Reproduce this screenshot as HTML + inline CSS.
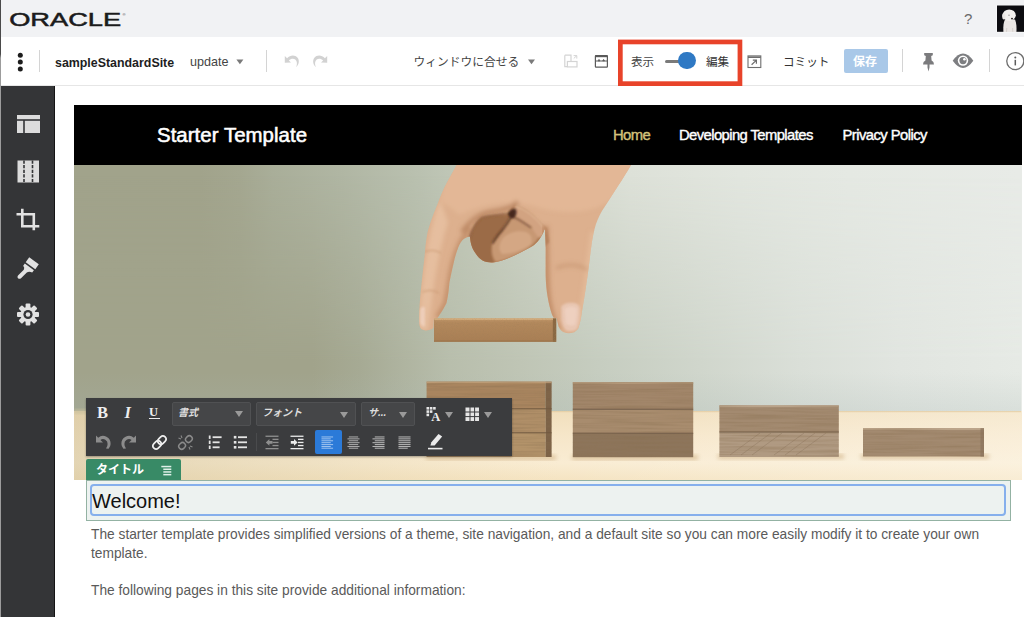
<!DOCTYPE html>
<html lang="ja">
<head>
<meta charset="utf-8">
<title>sampleStandardSite</title>
<style>
*{box-sizing:border-box;margin:0;padding:0}
html,body{width:1024px;height:617px;overflow:hidden;background:#fff}
body{font-family:"Liberation Sans","Noto Sans CJK JP",sans-serif;position:relative;color:#222}
.abs{position:absolute}
#topbar{left:0;top:0;width:1024px;height:37px;background:#f1f2f4}
#toolbar{left:0;top:37px;width:1024px;height:49px;background:#fff;border-bottom:1px solid #e6e6e6}
#leftedge{left:0;top:0;width:1px;height:86px;background:linear-gradient(#4a4a4a 0,#4a4a4a 54px,#9c9c9c 58px,#9c9c9c 86px)}
#sidebar{left:0;top:86px;width:55px;height:531px;background:#343537;border-right:1px solid #141414;border-left:1px solid #9c9c9c}
.t{position:absolute;white-space:nowrap;line-height:1}
.sep{position:absolute;width:1px;background:#d4d4d4}
#preview{left:74px;top:105px;width:948px;height:512px}
#sitehead{left:0;top:0;width:948px;height:60px;background:#000}
#photo{left:0;top:60px;width:948px;height:315px;overflow:hidden}
#rte{left:86px;top:397.5px;width:426.3px;height:58.8px;background:#3b3c3e;box-shadow:0 1px 2px rgba(0,0,0,.35)}
.sel{position:absolute;height:24px;top:4px;background:#454648;border:1px solid #505153;border-radius:2px}
.arr{position:absolute;width:0;height:0;border-left:4px solid transparent;border-right:4px solid transparent;border-top:6px solid #9a9a9a}
#tag{left:86px;top:459px;width:95px;height:21px;background:#388a66;border-radius:2px 2px 0 0}
#titleouter{left:86px;top:480px;width:925px;height:41px;background:#edf2f0;border:1px solid #93b2a3}
#titleinner{left:90px;top:484px;width:916px;height:32px;border:2px solid #86afec;border-radius:4px;background:#edf2f0}
</style>
</head>
<body>
<div class="abs" id="topbar"></div>
<div class="abs" id="toolbar"></div>
<div class="abs" id="leftedge"></div>
<div class="abs" id="sidebar"></div>

<!-- TOPBAR CONTENT -->
<svg class="abs" style="left:8px;top:8px" width="124" height="22" viewBox="0 0 124 22">
  <text x="1.2" y="18" font-family="Liberation Sans, sans-serif" font-size="19" fill="#1b1b1b" stroke="#1b1b1b" stroke-width="0.5" textLength="112" lengthAdjust="spacingAndGlyphs">ORACLE</text>
  <text x="114.6" y="7.6" font-family="Liberation Sans, sans-serif" font-size="4.2" fill="#333">®</text>
</svg>
<div class="t" style="left:964px;top:11px;font-size:15px;color:#6a6a6a">?</div>
<svg class="abs" style="left:996px;top:4px" width="28" height="29" viewBox="996 4 28 29">
  <defs><filter id="avb" x="-10%" y="-10%" width="120%" height="120%"><feGaussianBlur stdDeviation="0.5"/></filter></defs>
  <rect x="996.3" y="4.8" width="28" height="27.7" fill="#fafafa"/>
  <rect x="997" y="5.5" width="27" height="26.3" fill="#0c0c10"/>
  <g filter="url(#avb)">
    <path d="M1003.4 32 C1003 26 1003.6 22 1005 19.5 L1015 19.5 C1016.4 23 1016.8 27 1016.4 32Z" fill="#eae6e4"/>
    <ellipse cx="1009.2" cy="15.2" rx="6.6" ry="5.8" fill="#f3f0ee"/>
    <ellipse cx="1003.8" cy="16.2" rx="1.6" ry="3.2" fill="#ebe7e4"/>
    <ellipse cx="1012" cy="18.6" rx="1" ry="0.9" fill="#2a2624"/>
    <ellipse cx="1009" cy="15.2" rx="0.7" ry="0.6" fill="#8a8684"/>
    <path d="M1006.5 31.8 L1006.8 28 M1012.8 31.8 L1012.6 28" stroke="#cfcac6" stroke-width="0.8"/>
  </g>
</svg>
<!-- TOOLBAR CONTENT -->
<svg class="abs" style="left:16px;top:50px" width="8" height="24" viewBox="0 0 8 24">
  <circle cx="4.3" cy="5.2" r="2.5" fill="#1c1c1c"/><circle cx="4.3" cy="12.1" r="2.5" fill="#1c1c1c"/><circle cx="4.3" cy="19" r="2.5" fill="#1c1c1c"/>
</svg>
<div class="sep" style="left:39px;top:50px;height:22px"></div>
<div class="t" id="sitename" style="left:55px;top:56.5px;font-size:12.4px;font-weight:bold;color:#1e1e1e">sampleStandardSite</div>
<div class="t" id="upd" style="left:190px;top:55.5px;font-size:12.6px;color:#444">update</div>
<svg class="abs" style="left:235px;top:58px" width="10" height="8" viewBox="0 0 10 8"><path d="M1.4 1.6 H8.4 L4.9 6.2Z" fill="#7a7a7a"/></svg>
<div class="sep" style="left:266px;top:50px;height:22px"></div>
<svg class="abs" style="left:284px;top:53px" width="16" height="15" viewBox="0 0 16 15"><path d="M0.8 3 L0.8 9.8 L7 9.5 L4.9 7.4 C6.6 5.6 9.4 5 11.3 6.5 C13.2 8.1 13.4 11 12.2 14.2 C15 11.6 15.7 7.6 13.6 4.8 C11.1 1.6 6.4 1.6 3.1 5.3 Z" fill="#d2d2d2"/></svg>
<svg class="abs" style="left:312px;top:53px" width="16" height="15" viewBox="0 0 16 15"><path transform="translate(16,0) scale(-1,1)" d="M0.8 3 L0.8 9.8 L7 9.5 L4.9 7.4 C6.6 5.6 9.4 5 11.3 6.5 C13.2 8.1 13.4 11 12.2 14.2 C15 11.6 15.7 7.6 13.6 4.8 C11.1 1.6 6.4 1.6 3.1 5.3 Z" fill="#d2d2d2"/></svg>
<div class="t" id="fit" style="margin-top:1.5px;left:413.5px;top:54.2px;font-size:11.75px;color:#444">ウィンドウに合せる</div>
<svg class="abs" style="left:527px;top:58px" width="10" height="8" viewBox="0 0 10 8"><path d="M1 1.6 H8 L4.5 6.2Z" fill="#7a7a7a"/></svg>
<svg class="abs" style="left:562px;top:52px" width="18" height="18" viewBox="0 0 18 18" fill="none" stroke="#d4d4d4" stroke-width="1.2">
  <path d="M2.8 3.2 H9 V9.5 M5.4 14.6 H2.8 V3.2"/><rect x="5.4" y="9.5" width="9.6" height="5.4" fill="#fff"/><path d="M11.6 3.6 H14.8 V6.6 M14.6 3.8 L11.8 6.4" stroke-width="1"/>
</svg>
<svg class="abs" style="left:593px;top:53px" width="16" height="16" viewBox="0 0 16 16" fill="none" stroke="#5a5a5a" stroke-width="1.2">
  <rect x="2.4" y="2.6" width="12" height="11.6" rx="0.6"/><path d="M2.4 3.2 H14.4" stroke-width="2"/><path d="M2.4 8 H14.4" stroke-width="1"/><path d="M5 8 L6 6.3 L7 8Z M9.6 8 L10.6 6.3 L11.6 8Z" fill="#5a5a5a" stroke-width="0.6"/>
</svg>
<svg class="abs" style="left:616px;top:38px" width="130" height="50" viewBox="616 38 130 50"><rect x="620.35" y="41.95" width="119.6" height="41.7" fill="none" stroke="#e8432a" stroke-width="4.7"/></svg>
<div class="t" id="hyoji" style="margin-top:1.5px;left:631px;top:54.3px;font-size:11.6px;color:#444">表示</div>
<div class="abs" style="left:665px;top:59.5px;width:20px;height:3px;background:#7a7a7a;border-radius:2px"></div>
<div class="abs" style="left:678.3px;top:52px;width:17.4px;height:17.4px;border-radius:50%;background:#2f79c4"></div>
<div class="t" id="henshu" style="margin-top:1.5px;left:706px;top:54.3px;font-size:11.6px;color:#333">編集</div>
<svg class="abs" style="left:747px;top:53px" width="16" height="16" viewBox="0 0 16 16" fill="none" stroke="#6e6e6e" stroke-width="1.1">
  <rect x="1" y="2.9" width="12.8" height="11.6"/><path d="M1 4.2 H13.8" stroke-width="1.6"/><path d="M4.6 11.8 L9.2 7.4 M5.8 7.2 H9.4 V10.8" stroke-width="1.2"/>
</svg>
<div class="t" id="commit" style="margin-top:1.5px;left:783px;top:54.3px;font-size:11.6px;color:#333">コミット</div>
<div class="abs" style="left:844px;top:49px;width:44px;height:24px;background:#a9c8e8;border-radius:2px"></div>
<div class="t" id="save" style="margin-top:1.5px;left:853px;top:54px;font-size:12px;font-weight:bold;color:#fff">保存</div>
<div class="sep" style="left:902px;top:49px;height:23px"></div>
<svg class="abs" style="left:920px;top:51.6px" width="18" height="21" viewBox="0 0 18 21"><path d="M4.2 1 H12.8 V3.2 L11.2 4 L11.6 8.4 Q14 9.6 14 12.4 H9.5 V15.5 L8.5 19.5 L7.5 15.5 V12.4 H3 Q3 9.6 5.4 8.4 L5.8 4 L4.2 3.2Z" fill="#7b7b7d"/></svg>
<svg class="abs" style="left:952px;top:52px" width="22" height="18" viewBox="0 0 22 18">
  <path d="M0.7 8.8 Q11 -5.6 21.3 8.8 Q11 23.2 0.7 8.8Z" fill="#7d7e81"/><circle cx="11" cy="8.6" r="5.2" fill="#fff"/><circle cx="11" cy="8.6" r="3.6" fill="#7d7e81"/><circle cx="12.4" cy="7.3" r="1.3" fill="#fff"/>
</svg>
<div class="sep" style="left:989px;top:49px;height:23px"></div>
<svg class="abs" style="left:1004px;top:50px" width="22" height="22" viewBox="0 0 22 22"><circle cx="11.3" cy="11.1" r="8.55" fill="none" stroke="#6c6c6c" stroke-width="1.3"/><rect x="10.55" y="9.8" width="1.5" height="5.6" fill="#5c5c5c"/><circle cx="11.3" cy="7.4" r="1" fill="#5c5c5c"/></svg>
<!-- SIDEBAR ICONS -->
<svg class="abs" style="left:16px;top:114px" width="26" height="21" viewBox="0 0 26 21" fill="#dcdcdc">
  <rect x="1" y="1" width="23" height="4.2"/><rect x="1" y="6.8" width="6.2" height="12.2"/><rect x="8.8" y="6.8" width="15.2" height="12.2"/>
</svg>
<svg class="abs" style="left:16px;top:159px" width="26" height="25" viewBox="0 0 26 25">
  <rect x="1.5" y="1.5" width="21.5" height="22" fill="#dcdcdc"/>
  <path d="M8 1.5 V23.5 M16.5 1.5 V23.5" stroke="#343537" stroke-width="1.6" stroke-dasharray="3.2 1.4"/>
</svg>
<svg class="abs" style="left:15px;top:207px" width="26" height="25" viewBox="0 0 26 25" fill="none" stroke="#e2e2e2" stroke-width="2.6">
  <path d="M7.3 1.8 V19.3 H24.3"/><path d="M1.5 7.2 H18.8 V23.3"/>
</svg>
<svg class="abs" style="left:15px;top:255px" width="26" height="25" viewBox="0 0 26 25" fill="#e2e2e2">
  <path d="M14.2 2.2 L23.8 9.2 L20.3 14.2 L10.7 7.2Z"/>
  <path d="M9.8 8.6 L18.9 15.3 L17.2 17.4 Q13.8 16.2 11.8 17.6 L6 23.3 Q4.4 24.4 3 23.2 Q1.8 21.8 3 20.4 L8.8 14.8 Q10 12.6 8.2 10.7Z"/>
</svg>
<svg class="abs" style="left:15px;top:302px" width="26" height="25" viewBox="0 0 26 25">
  <g transform="translate(13,12.5)" fill="#e2e2e2">
    <circle r="7.6"/>
    <g id="gt"><rect x="-2.4" y="-11" width="4.8" height="22" rx="1"/></g>
    <rect x="-2.4" y="-11" width="4.8" height="22" rx="1" transform="rotate(45)"/>
    <rect x="-2.4" y="-11" width="4.8" height="22" rx="1" transform="rotate(90)"/>
    <rect x="-2.4" y="-11" width="4.8" height="22" rx="1" transform="rotate(135)"/>
    <circle r="4.6" fill="#343537"/><circle r="2.3" fill="#e2e2e2"/>
  </g>
</svg>

<div class="abs" id="preview">
  <div class="abs" id="sitehead">
    <div class="t" style="left:83px;top:20px;font-size:20.4px;color:#fff;letter-spacing:0.05px;-webkit-text-stroke:0.55px #fff">Starter Template</div>
    <div class="t" style="left:539px;top:23.3px;font-size:14.8px;color:#d5c27a;letter-spacing:-0.6px;-webkit-text-stroke:0.4px #d5c27a">Home</div>
    <div class="t" style="left:605px;top:23.3px;font-size:14.8px;color:#fff;letter-spacing:-0.58px;-webkit-text-stroke:0.4px #fff">Developing Templates</div>
    <div class="t" style="left:768.5px;top:23.3px;font-size:14.8px;color:#fff;letter-spacing:-0.55px;-webkit-text-stroke:0.4px #fff">Privacy Policy</div>
  </div>
  <div class="abs" id="photo">
<!-- PHOTO SVG -->
<svg class="abs" style="left:0;top:0" width="948" height="315" viewBox="74 165 948 315" preserveAspectRatio="none">
  <defs>
    <linearGradient id="wall" x1="74" y1="0" x2="1021" y2="0" gradientUnits="userSpaceOnUse">
      <stop offset="0.000" stop-color="#a1a38b"/>
      <stop offset="0.133" stop-color="#a1a38b"/>
      <stop offset="0.175" stop-color="#a4a790"/>
      <stop offset="0.210" stop-color="#a9ae99"/>
      <stop offset="0.281" stop-color="#b0b6a3"/>
      <stop offset="0.359" stop-color="#b9c0af"/>
      <stop offset="0.403" stop-color="#c0c7b7"/>
      <stop offset="0.492" stop-color="#d0d6ca"/>
      <stop offset="0.588" stop-color="#dde1d8"/>
      <stop offset="0.703" stop-color="#e2e6df"/>
      <stop offset="0.819" stop-color="#e5e9e3"/>
      <stop offset="1.000" stop-color="#e8ebe7"/>
    </linearGradient>
    <linearGradient id="wallb" x1="74" y1="0" x2="1021" y2="0" gradientUnits="userSpaceOnUse">
      <stop offset="0.000" stop-color="#a1a38b"/>
      <stop offset="0.252" stop-color="#a1a38b"/>
      <stop offset="0.302" stop-color="#a6aa94"/>
      <stop offset="0.344" stop-color="#aeb39f"/>
      <stop offset="0.397" stop-color="#b8beac"/>
      <stop offset="0.471" stop-color="#bfc5b5"/>
      <stop offset="0.555" stop-color="#c6cdc0"/>
      <stop offset="0.661" stop-color="#d0d6cc"/>
      <stop offset="0.767" stop-color="#dadfd8"/>
      <stop offset="0.872" stop-color="#e1e5e0"/>
      <stop offset="1.000" stop-color="#e6eae5"/>
    </linearGradient>
    <linearGradient id="abovet" x1="0" y1="372" x2="0" y2="412" gradientUnits="userSpaceOnUse">
      <stop offset="0" stop-color="#a9b8b4" stop-opacity="0"/>
      <stop offset="1" stop-color="#a9b8b4" stop-opacity="0.22"/>
    </linearGradient>
    <linearGradient id="vfade" x1="0" y1="175" x2="0" y2="360" gradientUnits="userSpaceOnUse">
      <stop offset="0" stop-color="#fff" stop-opacity="0"/>
      <stop offset="1" stop-color="#fff" stop-opacity="1"/>
    </linearGradient>
    <mask id="vmask" maskUnits="userSpaceOnUse" x="74" y="165" width="947" height="250"><rect x="74" y="165" width="947" height="250" fill="url(#vfade)"/></mask>
    <linearGradient id="table" x1="0" x2="0" y1="411" y2="480" gradientUnits="userSpaceOnUse">
      <stop offset="0" stop-color="#f1dfbd"/>
      <stop offset="0.35" stop-color="#f6e6c9"/>
      <stop offset="0.75" stop-color="#f9ecd3"/>
      <stop offset="1" stop-color="#f5e4c2"/>
    </linearGradient>
    <linearGradient id="tableR" x1="560" x2="1021" y1="0" y2="0" gradientUnits="userSpaceOnUse">
      <stop offset="0" stop-color="#fff" stop-opacity="0"/>
      <stop offset="1" stop-color="#fffaf0" stop-opacity="0.38"/>
    </linearGradient>
    <linearGradient id="tableL" x1="74" x2="560" y1="0" y2="0" gradientUnits="userSpaceOnUse">
      <stop offset="0" stop-color="#cdbd94" stop-opacity="0.5"/>
      <stop offset="0.5" stop-color="#d8c8a0" stop-opacity="0.3"/>
      <stop offset="1" stop-color="#e8d0a0" stop-opacity="0"/>
    </linearGradient>
    <linearGradient id="skin" x1="420" x2="630" y1="0" y2="0" gradientUnits="userSpaceOnUse">
      <stop offset="0" stop-color="#e9c3a3"/>
      <stop offset="0.12" stop-color="#dfb08d"/>
      <stop offset="0.45" stop-color="#d6a37f"/>
      <stop offset="0.7" stop-color="#dcab88"/>
      <stop offset="1" stop-color="#e2b899"/>
    </linearGradient>
    <linearGradient id="thumb" x1="546" x2="596" y1="0" y2="0" gradientUnits="userSpaceOnUse">
      <stop offset="0" stop-color="#c8926e"/>
      <stop offset="0.35" stop-color="#dba984"/>
      <stop offset="1" stop-color="#e4b896"/>
    </linearGradient>
    <linearGradient id="blk" x1="0" x2="0" y1="318" y2="342" gradientUnits="userSpaceOnUse">
      <stop offset="0" stop-color="#c2986a"/>
      <stop offset="0.2" stop-color="#b2885c"/>
      <stop offset="1" stop-color="#a87e54"/>
    </linearGradient>
    <filter id="grain" x="0" y="0" width="100%" height="100%">
      <feTurbulence type="fractalNoise" baseFrequency="0.015 0.45" numOctaves="2" seed="7" result="n"/>
      <feColorMatrix in="n" type="matrix" values="0 0 0 0 0.25  0 0 0 0 0.16  0 0 0 0 0.08  1.6 0 0 0 -0.62"/>
      <feComposite in2="SourceGraphic" operator="in"/>
    </filter>
    <filter id="speck" x="0" y="0" width="100%" height="100%">
      <feTurbulence type="fractalNoise" baseFrequency="0.9" numOctaves="1" seed="3" result="n"/>
      <feColorMatrix in="n" type="matrix" values="0 0 0 0 0.35  0 0 0 0 0.22  0 0 0 0 0.1  1.8 0 0 0 -0.85"/>
      <feComposite in2="SourceGraphic" operator="in"/>
    </filter>
    <filter id="soft" x="-5%" y="-5%" width="110%" height="110%"><feGaussianBlur stdDeviation="2.2"/></filter>
    <filter id="soft1" x="-5%" y="-5%" width="110%" height="110%"><feGaussianBlur stdDeviation="1"/></filter>
    <clipPath id="handclip"><path id="handp" d="M456.7 165 C453 172 449.5 178 446.5 183.4 C443 190 440 197 437.7 203.8 C435 210 432.5 216.5 430.4 222.8 C429 227 427.8 231 426.9 235.9 C425.8 242 425.2 249 424.6 256.4 C423.6 265 422.6 274 421.7 282.6 C420.9 290 420.1 298 419.6 306 C419.2 312 419 318 419.3 323.5 C419.6 326.5 420.3 328.3 421.7 329.3 C423.5 330.5 425.5 330.6 427.5 330.2 C429.8 329.7 431.8 329 433.4 327.9 L433.9 319.1 L437.7 317.7 C441 313 444 308 446.5 303.1 C448 297 448.8 290 449.4 282.6 C450.6 276 452.2 269 453.8 262.2 C455 257 456.5 252 458.2 247.6 C459.8 243.5 461.6 240.6 464 238.8 C466 237.4 468 236.7 469.9 236.5 C470.2 239.5 470.6 242 471.3 244.7 C472.3 248 473.8 251 475.7 253.4 C477.8 256.4 480 259 483 260.7 C486.5 262.4 490.5 262.6 494.7 262.2 C499.5 261.6 504.5 259.8 509.3 257.8 C516 255 523 251.5 530 247.6 C533 246 535.5 244 537.5 241.8 C540.5 238.5 543 233.5 544.8 228.6 C545.4 234 545.7 241 545.7 247.6 C545.7 257 545.6 267 545.7 276.8 C545.9 284 546.6 291 547.7 297.2 C548.8 303.5 550.3 309.5 552.1 314.7 L553.6 317.7 L556.5 318 C557.3 321 557.9 323.5 558.6 326.4 C560 329.5 561.8 331.3 563.8 332.3 C566.5 333.4 569.8 333.5 572.6 332.8 C575 332 577 330.3 578.4 327.9 C580.2 323 581.2 317.5 581.9 311.8 C583.3 304 584.6 296 585.7 288.5 C586.8 281.5 587.7 274.5 588.6 268 C589.6 260 590.5 252 591.5 244.7 C592.5 237.5 594 230.5 595.9 224.2 C598 218 601 212 604.7 206.7 C609 200 613.5 193 617.8 186.3 C622.5 179 627 172 631 165 Z"/></clipPath>
  </defs>
  <rect x="74" y="165" width="948" height="315" fill="url(#wall)"/>
  <rect x="74" y="165" width="947" height="247" fill="url(#wallb)" mask="url(#vmask)"/>
  <rect x="74" y="372" width="947" height="40" fill="url(#abovet)"/>
  <!-- table -->
  <rect x="74" y="411" width="948" height="69" fill="url(#table)"/>
  <rect x="74" y="411" width="948" height="69" fill="url(#tableL)"/>
  <rect x="74" y="411" width="948" height="69" fill="url(#tableR)"/>
  <rect x="74" y="409" width="420" height="5" fill="#c9c09c" opacity="0.6" filter="url(#soft1)"/>
  <rect x="500" y="411" width="521" height="1.2" fill="#e3cba0" opacity="0.7"/>
  <!-- block shadows on table -->
  <g filter="url(#soft)" fill="#c9a878" opacity="0.55">
    <rect x="426" y="455" width="130" height="5"/><rect x="572" y="455" width="126" height="5"/><rect x="718" y="454" width="126" height="5"/><rect x="861" y="454" width="128" height="5"/>
  </g>
  <!-- stack 1 -->
  <g>
    <rect x="426.6" y="381.6" width="119" height="27.4" fill="#a9855f"/>
    <rect x="426.6" y="409" width="119" height="24" fill="#b08f68"/>
    <rect x="426.6" y="433" width="119" height="24" fill="#b3936a"/>
    <path d="M545.6 381.6 H551.6 V457 H545.6Z" fill="#7c6247"/>
    <rect x="426.6" y="381.6" width="125" height="1.6" fill="#c0a07a" opacity="0.8"/>
    <path d="M426.6 408.8 H551.6 M426.6 432.8 H551.6" stroke="#6f573f" stroke-width="1"/>
  </g>
  <!-- stack 2 -->
  <g>
    <rect x="572.8" y="382.2" width="120.4" height="27" fill="#a2866a"/>
    <rect x="572.8" y="409.2" width="120.4" height="24" fill="#a88c6e"/>
    <rect x="572.8" y="433.2" width="120.4" height="24" fill="#8d755b"/>
    <rect x="572.8" y="382.2" width="120.4" height="1.6" fill="#bda283" opacity="0.8"/>
    <path d="M572.8 409.2 H693.2 M572.8 433.2 H693.2" stroke="#6a5540" stroke-width="1"/>
  </g>
  <!-- stack 3 -->
  <g>
    <rect x="719.4" y="405.4" width="119.4" height="26.6" fill="#a38a70"/>
    <rect x="719.4" y="432" width="119.4" height="25" fill="#b09a82"/>
    <rect x="719.4" y="405.4" width="119.4" height="1.8" fill="#bea78d" opacity="0.85"/>
    <path d="M719.4 432 H838.8" stroke="#6f5a45" stroke-width="1"/>
    <path d="M730 455 L760 433 M752 455 L782 433 M774 455 L804 433 M796 455 L826 433 M741 455 L771 433 M785 455 L815 433" stroke="#8f7a62" stroke-width="0.8" opacity="0.6"/>
  </g>
  <!-- stack 4 -->
  <g>
    <rect x="863" y="428.2" width="121" height="28.3" fill="#a38a70"/>
    <rect x="863" y="428.2" width="121" height="1.8" fill="#bfa88e" opacity="0.85"/>
    <rect x="980.5" y="428.2" width="3.5" height="28.3" fill="#8a735c" opacity="0.7"/>
  </g>
  <g filter="url(#grain)" opacity="0.55">
    <rect x="426.6" y="381.6" width="125" height="75.4"/><rect x="572.8" y="382.2" width="120.4" height="75"/><rect x="719.4" y="405.4" width="119.4" height="51.6"/><rect x="863" y="428.2" width="121" height="28.3"/>
  </g>
  <!-- hand -->
  <use href="#handp" fill="#ddb08e"/>
  <g clip-path="url(#handclip)">
    <g filter="url(#soft)">
      <!-- light back of hand -->
      <path d="M450 160 L640 160 L612 200 C590 215 560 215 530 205 C505 200 480 205 460 215 L440 200Z" fill="#e3b897" opacity="0.9"/>
      <!-- index finger light side -->
      <path d="M440 200 C430 225 425 260 421 300 L419 330 L428 330 C432 300 436 260 448 222Z" fill="#e8c3a4" opacity="0.75"/>
      <!-- index inner shadow -->
      <path d="M471 228 C462 238 457 250 453 266 C450 280 449 292 446 304 L438 318" stroke="#bf8b66" stroke-width="7" fill="none" opacity="0.75"/>
      <!-- fold between index base and curled fingers -->
      <path d="M462 232 C470 222 478 214 492 212 C503 210 512 208 518 202" stroke="#b8825e" stroke-width="5" fill="none" opacity="0.8"/>
    </g>
    <!-- curled fingers -->
    <path d="M469.3 238.2 C472 229 476 221.5 481.7 217.6 C489 215.5 499 214.6 507.9 213.4 C510 210.5 512 207 514.8 205.2 C519 206.5 523.5 208.3 527.2 210.7 C532 214 536 218 539.6 221.7 L547 229 L549 242 L530 262 L480 270 L466 250Z" fill="#a97650" filter="url(#soft1)"/>
    <g filter="url(#soft1)">
      <path d="M481.7 218 C476 222 472 230 469.3 238.5 C470 246 473 254 480 260 C484 263 489 263.5 494 262.5 C491 256 490.5 249 492.7 242.4 L502.4 230 L510 217 C502 214.5 490 215.5 481.7 218Z" fill="#9a6946" opacity="0.9"/>
      <path d="M502.4 230 L492.7 242.4 C491 250 492 257 496 262 C506 260 516 255 526 250 C532 246 536 242 538 238 L531.3 227.9 L514.8 217.6 L510.6 217Z" fill="#c79873"/>
      <path d="M503 238 C509 232 518 230 526 232 C531 234 533 239 531 244 C524 250 512 254 502 254 C498 250 499 243 503 238Z" fill="#d6a987" opacity="0.85"/>
      <path d="M514.8 205.4 C520 206.5 524 208.5 527.2 210.7 C532 214 536 218 539.6 221.7 L546.5 229.5 L544 236 L538 238 L531.3 227.9 L514.8 217.6 L513 212Z" fill="#d2a381"/>
      <path d="M516 206 C524 208 534 215 544 227" stroke="#e0b594" stroke-width="2.5" fill="none" opacity="0.8"/>
    </g>
    <g filter="url(#soft1)">
      <path d="M492.5 243.5 C495.5 238.5 499 233.5 502.4 230 C505.5 226 508.5 221.5 510.8 217.4" stroke="#4e2c1c" stroke-width="2" fill="none" opacity="0.8"/>
      <path d="M507.5 213.8 C509.5 210.5 512.5 208.5 515.5 208.8 C517.3 211.5 516.8 215.5 513.5 218.5 C511 219 509 217.5 507.5 213.8Z" fill="#3a2016" opacity="0.9"/>
      <path d="M514.5 217.5 C520 220 526 224 531.3 227.9" stroke="#6e4630" stroke-width="1.4" fill="none" opacity="0.8"/>
      <path d="M469.5 238 C472 229 476 221.5 481.7 217.6 C489 215.5 499 214.6 507.5 213.5" stroke="#7e5236" stroke-width="1.6" fill="none" opacity="0.6"/>
    </g>
    <!-- thumb -->
    <g filter="url(#soft)">
      <path d="M545 226 C546.5 250 545 280 548 300 C550 312 553 322 558 330" stroke="#bd8862" stroke-width="7" fill="none" opacity="0.8"/>
      <path d="M594 232 C591 256 588 282 584 306 C583 316 581 324 578 330" stroke="#e6bd9d" stroke-width="8" fill="none" opacity="0.7"/>
      <path d="M556 268 C566 264 578 264 588 270" stroke="#c18f6a" stroke-width="3" fill="none" opacity="0.6"/>
    </g>
    <!-- nails -->
    <path d="M561.2 307 C563 303.5 568 302.3 573 302.8 C577 303.2 579.6 305 579.9 308 C580.3 316 579.4 323.5 576.8 329 C574 331.5 569.5 331.8 566 330.4 C563.5 328 562 324 561.4 319Z" fill="#e8c6b2" filter="url(#soft1)"/>
    <path d="M564.5 309 C567 306 573 305.6 577 308 C577.4 314 576.6 320 575 325 C571 326.6 567.5 325.6 565.5 323Z" fill="#efd2c2" filter="url(#soft1)" opacity="0.8"/>
    <path d="M420 310 C421 306.5 423.5 306 425 308 L424.8 326 C422.8 327 421 325.5 420 322.5Z" fill="#efd0bd" filter="url(#soft1)" opacity="0.9"/>
    <!-- finger joint lines -->
    <path d="M424 252 C430 249.5 436 250 441 253 M422.5 292 C428 289.5 434 290 439 293" stroke="#c99973" stroke-width="1.3" fill="none" opacity="0.7" filter="url(#soft1)"/>
  </g>
  <!-- held block -->
  <rect x="434" y="318.4" width="122.2" height="23.4" fill="url(#blk)"/>
  <rect x="552.8" y="318.4" width="3.4" height="23.4" fill="#8a6842"/>
  <rect x="434" y="318.4" width="119" height="1.4" fill="#d6b080"/>
  <rect x="434" y="340.4" width="122" height="1.4" fill="#9a7248" opacity="0.7"/>
  <rect x="434" y="318.4" width="122.2" height="23.4" filter="url(#speck)" opacity="0.5"/>
</svg>
  </div>
</div>

<div class="abs" id="rte">
<!-- RTE CONTENT -->
<div class="t" style="left:11px;top:7.5px;font-family:'Liberation Serif',serif;font-weight:bold;font-size:16.5px;color:#eee">B</div>
<div class="t" style="left:38.5px;top:7.5px;font-family:'Liberation Serif',serif;font-weight:bold;font-style:italic;font-size:16.5px;color:#eee">I</div>
<div class="t" style="left:63px;top:8.5px;font-family:'Liberation Serif',serif;font-weight:bold;font-size:12.5px;color:#eee">U</div>
<div class="abs" style="left:62.5px;top:20.5px;width:11.5px;height:1.3px;background:#eee"></div>
<div class="sel" style="left:86px;width:79px"></div>
<div class="t" style="left:92px;top:10.4px;font-size:10px;font-weight:bold;font-style:italic;color:#ddd">書式</div>
<div class="arr" style="left:149px;top:13.5px"></div>
<div class="sel" style="left:170px;width:100px"></div>
<div class="t" style="left:176px;top:10.4px;font-size:10px;font-weight:bold;font-style:italic;color:#ddd">フォント</div>
<div class="arr" style="left:254px;top:14px"></div>
<div class="sel" style="left:275px;width:54px"></div>
<div class="t" style="left:282px;top:10.4px;font-size:10px;font-weight:bold;font-style:italic;color:#ddd">サ...</div>
<div class="arr" style="left:313px;top:14px"></div>
<svg class="abs" style="left:340px;top:8px" width="16" height="16" viewBox="0 0 16 16">
  <g fill="#e6e6e6"><rect x="0.5" y="1" width="2.6" height="2.6"/><rect x="3.8" y="1" width="2.6" height="2.6"/><rect x="7.1" y="1" width="2.6" height="2.6"/><rect x="0.5" y="4.3" width="2.6" height="2.6"/><rect x="3.8" y="4.3" width="2.6" height="2.6"/><rect x="0.5" y="7.6" width="2.6" height="2.6"/></g>
  <text x="5.2" y="14.6" font-family="Liberation Serif, serif" font-weight="bold" font-size="12.5" fill="#eee">A</text>
</svg>
<div class="arr" style="left:359px;top:14px"></div>
<svg class="abs" style="left:379px;top:9px" width="15" height="15" viewBox="0 0 15 15" fill="#e6e6e6">
  <rect x="0.5" y="0.5" width="13.5" height="13.5"/>
  <path d="M5 0 V15 M9.6 0 V15 M0 5 H15 M0 9.6 H15" stroke="#3a3b3d" stroke-width="1"/>
</svg>
<div class="arr" style="left:398px;top:14px"></div>
<!-- row 2 -->
<svg class="abs" style="left:9px;top:36px" width="17" height="16" viewBox="0 0 17 16"><path d="M1 1.5 V8.5 H8 L5.4 5.9 A4.6 4.6 0 0 1 12.6 10 Q12.6 12.6 11 14.6 L13.6 14.8 Q15.6 12.6 15.6 10 A7.6 7.6 0 0 0 3.2 3.7Z" fill="#8c8c8c"/></svg>
<svg class="abs" style="left:34px;top:36px" width="17" height="16" viewBox="0 0 17 16"><path transform="translate(17,0) scale(-1,1)" d="M1 1.5 V8.5 H8 L5.4 5.9 A4.6 4.6 0 0 1 12.6 10 Q12.6 12.6 11 14.6 L13.6 14.8 Q15.6 12.6 15.6 10 A7.6 7.6 0 0 0 3.2 3.7Z" fill="#8c8c8c"/></svg>
<svg class="abs" style="left:65px;top:36px" width="17" height="17" viewBox="0 0 17 17" fill="none" stroke="#efefef" stroke-width="1.7">
  <g transform="rotate(-45 8.5 8.5)"><rect x="0.6" y="5.4" width="9" height="6.2" rx="3.1"/><rect x="7.4" y="5.4" width="9" height="6.2" rx="3.1"/></g>
</svg>
<svg class="abs" style="left:91px;top:36px" width="17" height="17" viewBox="0 0 17 17" fill="none" stroke="#8a8a8a" stroke-width="1.5">
  <g transform="rotate(-45 8.5 8.5)"><rect x="0.2" y="5.6" width="7" height="5.8" rx="2.9"/><rect x="9.8" y="5.6" width="7" height="5.8" rx="2.9"/></g>
  <path d="M4 1.5 L5 4 M1.5 4 L4 5 M13 15.5 L12 13 M15.5 13 L13 12" stroke-width="1.1"/>
</svg>
<svg class="abs" style="left:122px;top:37px" width="14" height="15" viewBox="0 0 14 15" fill="#e4e4e4">
  <rect x="0.8" y="0.5" width="1.8" height="3.4"/><rect x="0.8" y="5.6" width="1.8" height="3.4"/><rect x="0.8" y="10.6" width="1.8" height="3.4"/>
  <rect x="4.6" y="1.3" width="9" height="1.8"/><rect x="4.6" y="6.4" width="7" height="1.8"/><rect x="4.6" y="11.4" width="7" height="1.8"/>
</svg>
<svg class="abs" style="left:147px;top:37px" width="15" height="15" viewBox="0 0 15 15" fill="#e4e4e4">
  <rect x="0.8" y="0.9" width="2.6" height="2.6"/><rect x="0.8" y="6" width="2.6" height="2.6"/><rect x="0.8" y="11" width="2.6" height="2.6"/>
  <rect x="5" y="1.3" width="9" height="1.8"/><rect x="5" y="6.4" width="9" height="1.8"/><rect x="5" y="11.4" width="9" height="1.8"/>
</svg>
<div class="abs" style="left:170px;top:35px;width:1px;height:18px;background:#4a4b4d"></div>
<svg class="abs" style="left:179px;top:37px" width="14" height="15" viewBox="0 0 14 15" fill="#8f8f8f">
  <rect x="0.5" y="0.6" width="13" height="1.3"/><rect x="7.5" y="3.7" width="6" height="1.3"/><rect x="7.5" y="6.8" width="6" height="1.3"/><rect x="7.5" y="9.9" width="6" height="1.3"/><rect x="0.5" y="13" width="13" height="1.3"/>
  <path d="M0.8 7.4 L4.4 4 V6 H7.5 V8.8 H4.4 V10.8Z"/>
</svg>
<svg class="abs" style="left:204px;top:37px" width="14" height="15" viewBox="0 0 14 15" fill="#ececec">
  <rect x="0.5" y="0.6" width="13" height="1.3"/><rect x="8" y="3.7" width="5.5" height="1.3"/><rect x="8" y="6.8" width="5.5" height="1.3"/><rect x="8" y="9.9" width="5.5" height="1.3"/><rect x="0.5" y="13" width="13" height="1.3"/>
  <path d="M7.6 7.4 L4 4 V6 H0.8 V8.8 H4 V10.8Z"/>
</svg>
<div class="abs" style="left:229px;top:32.5px;width:26.5px;height:24px;background:#2b7ad8;border-radius:2px"></div>
<svg class="abs" style="left:235px;top:38px" width="13" height="13" viewBox="0 0 14 15" preserveAspectRatio="none" fill="#9cc1ee">
  <rect x="0.5" y="0.5" width="12.5" height="1.2"/><rect x="0.5" y="2.7" width="10" height="1.2"/><rect x="0.5" y="4.9" width="12.5" height="1.2"/><rect x="0.5" y="7.1" width="10" height="1.2"/><rect x="0.5" y="9.3" width="12.5" height="1.2"/><rect x="0.5" y="11.5" width="10" height="1.2"/><rect x="0.5" y="13.5" width="12.5" height="1.2"/>
</svg>
<svg class="abs" style="left:261px;top:38px" width="13" height="13" viewBox="0 0 14 15" preserveAspectRatio="none" fill="#a9a9a9">
  <rect x="2" y="0.5" width="10" height="1.2"/><rect x="0.5" y="2.7" width="13" height="1.2"/><rect x="2" y="4.9" width="10" height="1.2"/><rect x="0.5" y="7.1" width="13" height="1.2"/><rect x="2" y="9.3" width="10" height="1.2"/><rect x="0.5" y="11.5" width="13" height="1.2"/><rect x="2" y="13.5" width="10" height="1.2"/>
</svg>
<svg class="abs" style="left:286px;top:38px" width="13" height="13" viewBox="0 0 14 15" preserveAspectRatio="none" fill="#b4b4b4">
  <rect x="3" y="0.5" width="10.5" height="1.2"/><rect x="0.5" y="2.7" width="13" height="1.2"/><rect x="3" y="4.9" width="10.5" height="1.2"/><rect x="0.5" y="7.1" width="13" height="1.2"/><rect x="3" y="9.3" width="10.5" height="1.2"/><rect x="0.5" y="11.5" width="13" height="1.2"/><rect x="3" y="13.5" width="10.5" height="1.2"/>
</svg>
<svg class="abs" style="left:312px;top:38px" width="13" height="13" viewBox="0 0 14 15" preserveAspectRatio="none" fill="#b4b4b4">
  <rect x="0.5" y="0.5" width="13" height="1.2"/><rect x="0.5" y="2.7" width="13" height="1.2"/><rect x="0.5" y="4.9" width="13" height="1.2"/><rect x="0.5" y="7.1" width="13" height="1.2"/><rect x="0.5" y="9.3" width="13" height="1.2"/><rect x="0.5" y="11.5" width="13" height="1.2"/><rect x="0.5" y="13.5" width="10" height="1.2"/>
</svg>
<svg class="abs" style="left:341px;top:35px" width="17" height="18" viewBox="0 0 17 18" fill="#ececec">
  <path d="M11.5 1 L15.2 3.6 L7.6 12.4 L3.4 12.6 L4.4 9.2Z"/><rect x="1" y="14.8" width="14.5" height="1.6"/>
</svg>
</div>
<div class="abs" id="tag">
  <div class="t" style="left:10px;top:5.3px;font-size:12px;font-weight:bold;color:#fff">タイトル</div>
  <svg class="abs" style="left:75px;top:5.6px" width="11" height="11" viewBox="0 0 11 11" fill="#dff0e8"><rect x="0.3" y="0.8" width="10" height="1.5"/><rect x="2.3" y="3.5" width="8" height="1.5"/><rect x="2.3" y="6.2" width="8" height="1.5"/><rect x="2.3" y="8.9" width="8" height="1.5"/></svg>
</div>
<div class="abs" id="titleouter"></div>
<div class="abs" id="titleinner"></div>
<div class="t" style="left:92px;top:491.2px;font-size:20px;color:#111">Welcome!</div>

<div class="abs" style="left:91px;top:525.8px;width:920px;font-size:13.75px;line-height:18.7px;color:#5a5a5a">
The starter template provides simplified versions of a theme, site navigation, and a default site so you can more easily modify it to create your own template.<br><br>The following pages in this site provide additional information:
</div>
</body>
</html>
